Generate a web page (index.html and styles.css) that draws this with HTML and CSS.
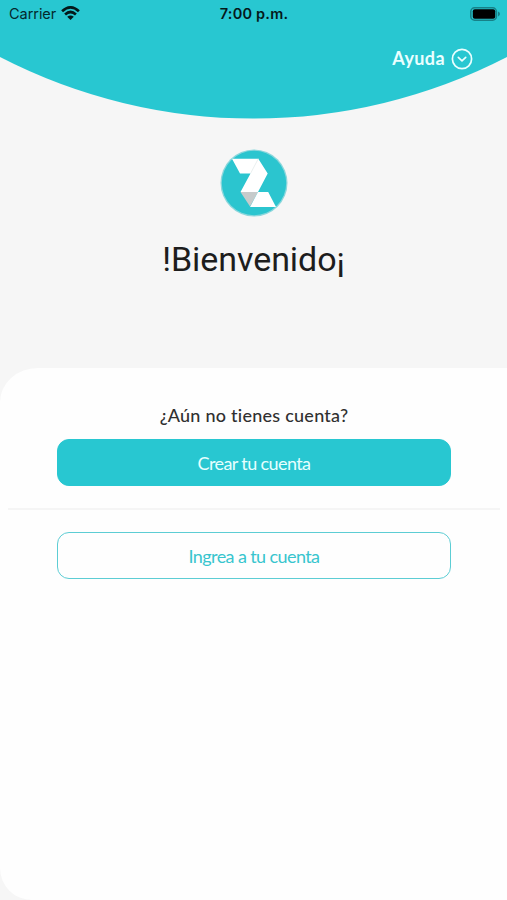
FILE: index.html
```html
<!DOCTYPE html>
<html lang="es">
<head>
<meta charset="utf-8">
<title>Bienvenido</title>
<link rel="stylesheet" href="styles.css">
</head>
<body>
<main class="screen">
  <header class="header">
    <svg class="header-curve" viewBox="0 0 507 119"><path fill="#28c7d1" d="M0 0H507V57A553 553 0 0 1 0 57Z"/></svg>
    <div class="header-content">
      <div class="status">
        <div class="carrier"><span>Carrier</span>
          <svg width="19" height="14" viewBox="0 0 19 14" fill="none" stroke="#04191b" stroke-width="2.7"><path d="M1.1 5.2Q9.5-2.4 17.9 5.2"/><path d="M4.1 8.4Q9.5 3.6 14.9 8.4"/><path fill="#04191b" stroke="none" d="M6.2 10.8Q9.5 8 12.8 10.8L9.5 14Z"/></svg>
        </div>
        <div class="time">7:00 p.m.</div>
        <svg class="battery" width="31" height="14" viewBox="0 0 31 14"><rect x=".8" y=".8" width="25.6" height="12.4" rx="3.8" fill="none" stroke="#178188" stroke-width="1.5"/><rect x="2.8" y="2.2" width="22.4" height="9.6" rx="2" fill="#000"/><path fill="#178188" d="M28 4.6Q30 5.5 30 7T28 9.4Z"/></svg>
      </div>
      <div class="help"><span>Ayuda</span>
        <svg width="22" height="22" viewBox="0 0 22 22" fill="none" stroke="#eaffff" stroke-width="1.7"><circle cx="11" cy="11" r="9.6"/><path d="M7.3 9.4L11 12.8L14.7 9.4" stroke-linecap="round" stroke-linejoin="round"/></svg>
      </div>
    </div>
  </header>
  <section class="welcome">
    <svg class="logo" width="68" height="68" viewBox="0 0 68 68"><circle cx="34" cy="34" r="33.5" fill="#8bd7dc"/><circle cx="34" cy="34" r="32.2" fill="#2bc5cf"/><path fill="#fff" d="M12 9.7H38.3L47.7 24.5L38 43H20.5L30.5 24.5H20Z"/><path fill="#c6cbcb" d="M20.5 43H38L30 57.5Z"/><path fill="#fff" d="M38 43H48.2L56 58H30Z"/><path d="M38.3 9.7L30.5 24.5" stroke="#e1e8e8" stroke-width=".7"/></svg>
    <h1 class="title">!Bienvenido¡</h1>
  </section>
  <section class="card">
    <p class="question">¿Aún no tienes cuenta?</p>
    <button class="btn primary"><span>Crear tu cuenta</span></button>
    <hr class="divider">
    <button class="btn outline"><span>Ingrea a tu cuenta</span></button>
  </section>
</main>
</body>
</html>
```
FILE: styles.css
```css
* { box-sizing: border-box; }
body { margin: 0; background: #f6f6f6; font-family: Lato, "Liberation Sans", sans-serif; font-variant-ligatures: none; }
.screen { height: 900px; display: flex; flex-direction: column; overflow: hidden; }
.header { display: grid; height: 119px; flex: none; }
.header-curve, .header-content { grid-area: 1 / 1; }
.header-curve { width: 507px; height: 119px; display: block; }
.header-content { z-index: 1; }
.status { display: grid; grid-template-columns: 1fr auto 1fr; align-items: center; height: 27px; padding: 0 6px 0 9px; font: 14.5px/27px Inter, sans-serif; color: #04292c; }
.carrier { display: flex; align-items: center; gap: 5px; }
.carrier span { letter-spacing: -.05px; }
.carrier svg { margin-bottom: 1px; }
.time { font-weight: 600; font-size: 14.5px; letter-spacing: .2px; margin-left: -2px; color: #04191b; }
.battery { justify-self: end; }
.help { display: flex; align-items: center; justify-content: flex-end; gap: 6px; height: 22px; margin-top: 21px; padding-right: 34px; color: #eaffff; font-size: 18px; font-weight: 700; line-height: 20px; letter-spacing: .4px; }
.help span { margin-bottom: 2px; }
.welcome { display: flex; flex-direction: column; align-items: center; height: 249px; flex: none; padding-top: 30px; }
.logo { flex: none; }
.title { margin: 22px 0 0; font: 400 34px/40px Roboto, sans-serif; letter-spacing: -.05px; color: #1d1d1d; }
.card { flex: 1; display: flex; flex-direction: column; align-items: center; padding: 36px 7px 0 8px; background: #fefefe; border-radius: 38px 0 0 32px / 34px 0 0 32px; }
.question { margin: 0 0 13px; font-size: 18px; line-height: 22px; font-weight: 500; letter-spacing: .25px; color: #303030; }
.btn { width: 394px; height: 47px; flex: none; padding: 0; border-radius: 12px; font: 400 18px/22px Lato, sans-serif; letter-spacing: -.6px; }
.primary { background: #28c7d1; color: #e6ffff; border: 1px solid #28c7d1; }
.outline { background: #fefefe; color: #38c5ce; border: 1px solid #5ccdd4; }
.divider { width: 100%; height: 2px; flex: none; margin: 22px 0; border: 0; background: #f5f5f5; }
```
